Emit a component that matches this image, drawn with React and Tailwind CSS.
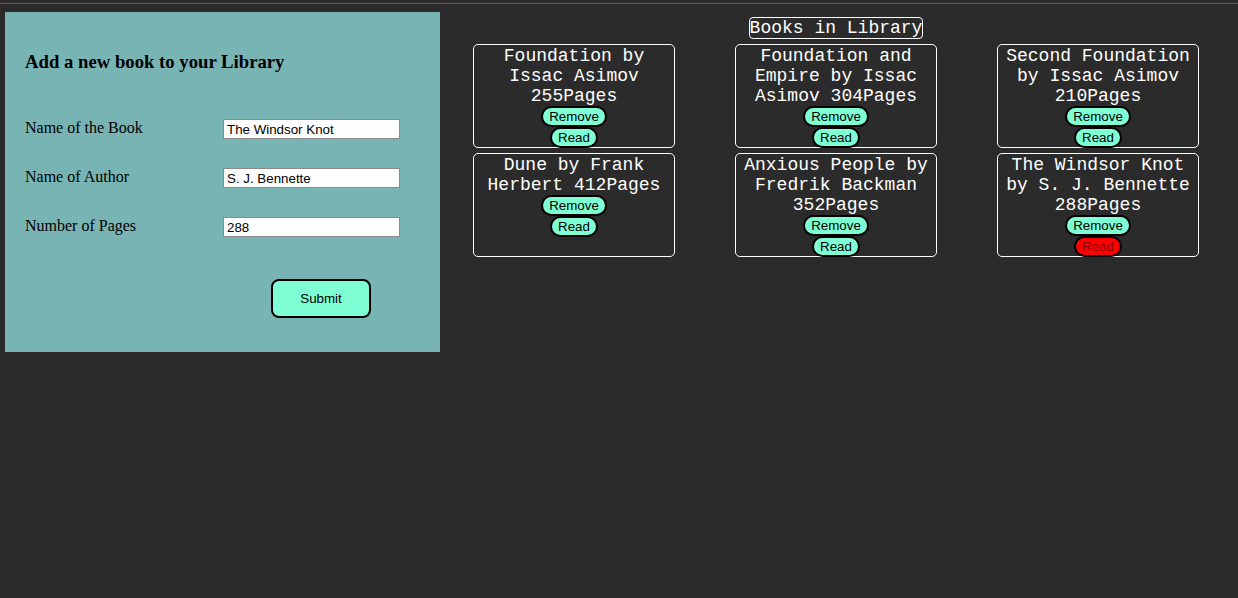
import React, { useState } from 'react';

const BOOKS = [
  { title: 'Foundation', author: 'Issac Asimov', pages: 255, read: false },
  { title: 'Foundation and Empire', author: 'Issac Asimov', pages: 304, read: false },
  { title: 'Second Foundation', author: 'Issac Asimov', pages: 210, read: false },
  { title: 'Dune', author: 'Frank Herbert', pages: 412, read: false },
  { title: 'Anxious People', author: 'Fredrik Backman', pages: 352, read: false },
  { title: 'The Windsor Knot', author: 'S. J. Bennette', pages: 288, read: true },
];

const FIELDS = [
  { key: 'title', label: 'Name of the Book' },
  { key: 'author', label: 'Name of Author' },
  { key: 'pages', label: 'Number of Pages' },
];

function BookCard({ book }) {
  return (
    <div className="flex flex-col items-center border border-white rounded-[5px] h-[104px] pt-[1px] text-center">
      <p className="text-[18px] leading-[20px] text-white px-1">
        {book.title} by {book.author} {book.pages}Pages
      </p>
      <button
        type="button"
        className="bg-[#7fffd4] text-black border-2 border-black rounded-full px-[6px] py-[1px] text-[13.33px] leading-[15px] font-['Liberation_Sans',Arial,sans-serif]"
      >
        Remove
      </button>
      <button
        type="button"
        className={
          book.read
            ? 'bg-[#ff0000] text-[#8b0000] border-2 border-black rounded-full px-[6px] py-[1px] text-[13.33px] leading-[15px] font-["Liberation_Sans",Arial,sans-serif]'
            : 'bg-[#7fffd4] text-black border-2 border-black rounded-full px-[6px] py-[1px] text-[13.33px] leading-[15px] font-["Liberation_Sans",Arial,sans-serif]'
        }
      >
        Read
      </button>
    </div>
  );
}

export default function App() {
  const [form, setForm] = useState({ title: 'The Windsor Knot', author: 'S. J. Bennette', pages: '288' });

  return (
    <div className="min-h-screen w-full bg-[#2b2b2b] font-['Liberation_Mono','Courier_New',monospace]">
      <div className="h-[3px]" />
      <div className="h-px bg-[#5c5c5c]" />
      <div className="flex items-start">
        <div className="ml-[5px] mt-[8px] w-[435px] h-[340px] bg-[#79b4b4] pl-[20px] pt-[39px] font-['Liberation_Serif','Times_New_Roman',serif] text-black">
          <h3 className="text-[18.72px] leading-[21px] font-bold">Add a new book to your Library</h3>
          <div className="mt-[47px] flex flex-col gap-[29px]">
            {FIELDS.map((f) => (
              <div key={f.key} className="flex items-center h-[20px]">
                <label className="w-[198px] text-[16px] leading-[18px] -mt-[2px]">{f.label}</label>
                <input
                  value={form[f.key]}
                  onChange={(e) => setForm({ ...form, [f.key]: e.target.value })}
                  className="w-[177px] h-[20px] bg-white border border-[#8a8a8a] px-[3px] text-[13.33px] font-['Liberation_Sans',Arial,sans-serif] outline-none"
                />
              </div>
            ))}
          </div>
          <button
            type="button"
            className="mt-[42px] ml-[246px] w-[100px] h-[39px] bg-[#7fffd4] border-2 border-black rounded-[8px] text-[13.33px] font-['Liberation_Sans',Arial,sans-serif]"
          >
            Submit
          </button>
        </div>
        <div className="ml-[33px] w-[726px] flex flex-col items-center">
          <h2 className="mt-[13px] border border-white rounded-[4px] text-white text-[18px] leading-[20px]">
            Books in Library
          </h2>
          <div className="mt-[5px] w-full grid grid-cols-[202px_202px_202px] gap-x-[60px] gap-y-[5px]">
            {BOOKS.map((b) => (
              <BookCard key={b.title} book={b} />
            ))}
          </div>
        </div>
      </div>
    </div>
  );
}
